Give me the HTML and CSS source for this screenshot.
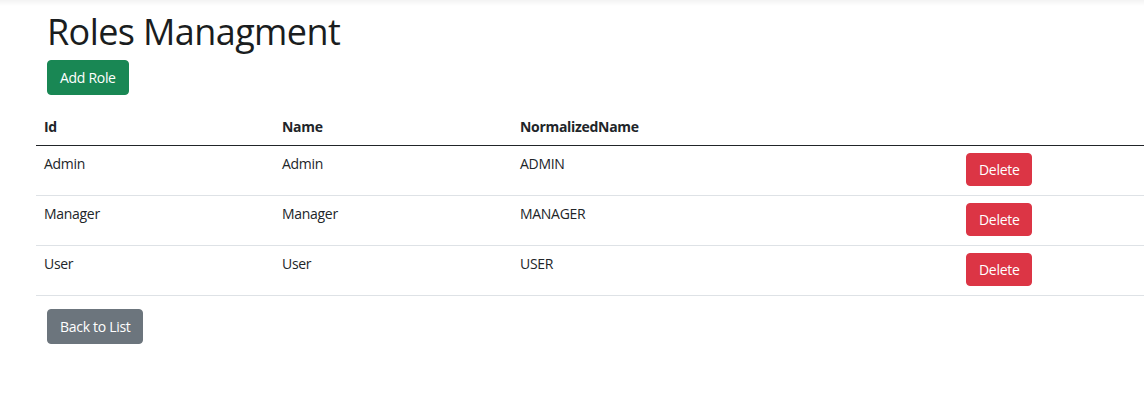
FILE: index.html
```html
<!DOCTYPE html>
<html lang="en">
<head>
<meta charset="utf-8">
<title>Roles Managment</title>
<link rel="stylesheet" href="styles.css">
</head>
<body>
<div class="topshade"></div>
<main class="page">
  <h1 class="title">Roles Managment</h1>
  <a class="btn btn-success" href="#">Add Role</a>
  <div class="table">
    <div class="row head">
      <div class="cell">Id</div>
      <div class="cell">Name</div>
      <div class="cell">NormalizedName</div>
      <div class="cell"></div>
      <div class="cell"></div>
    </div>
    <div class="row">
      <div class="cell">Admin</div>
      <div class="cell">Admin</div>
      <div class="cell">ADMIN</div>
      <div class="cell"></div>
      <div class="cell"><button class="btn btn-danger">Delete</button></div>
    </div>
    <div class="row">
      <div class="cell">Manager</div>
      <div class="cell">Manager</div>
      <div class="cell">MANAGER</div>
      <div class="cell"></div>
      <div class="cell"><button class="btn btn-danger">Delete</button></div>
    </div>
    <div class="row">
      <div class="cell">User</div>
      <div class="cell">User</div>
      <div class="cell">USER</div>
      <div class="cell"></div>
      <div class="cell"><button class="btn btn-danger">Delete</button></div>
    </div>
  </div>
  <a class="btn btn-secondary back" href="#">Back to List</a>
</main>
</body>
</html>
```
FILE: styles.css
```css
html, body {
  margin: 0;
  padding: 0;
  background: #fff;
  overflow: hidden;
}
body {
  font-family: "Open Sans", "Noto Sans", sans-serif;
  font-size: 14px;
  line-height: 1.5;
  color: #212529;
}
.topshade {
  height: 6px;
  background: linear-gradient(to bottom, #f3f3f3, #ffffff);
}
.page {
  padding-left: 36px;
  display: flex;
  flex-direction: column;
  align-items: flex-start;
}
.title {
  margin: 4px 0 6px 11px;
  font-size: 36px;
  font-weight: 500;
  line-height: 1.23;
  letter-spacing: -0.6px;
  color: #1a1d20;
}
.btn {
  display: inline-block;
  box-sizing: border-box;
  font-family: inherit;
  font-size: 14px;
  line-height: 21px;
  padding: 6px 12px;
  border: 1px solid transparent;
  border-radius: 4px;
  color: #fff;
  text-decoration: none;
  cursor: pointer;
  letter-spacing: -0.3px;
}
.btn-success {
  background: #198754;
  border-color: #198754;
  margin-left: 11px;
}
.btn-danger {
  background: #dc3545;
  border-color: #dc3545;
  padding: 5px 12px;
}
.btn-secondary {
  background: #6c757d;
  border-color: #6c757d;
}
.table {
  align-self: stretch;
  margin-top: 13px;
  display: flex;
  flex-direction: column;
}
.row {
  display: grid;
  grid-template-columns: 238px 238px 238px 208px 1fr;
  border-bottom: 1px solid #dee2e6;
}
.row.head {
  font-weight: 700;
  border-bottom: 1px solid #212529;
}
.cell {
  padding: 8px;
  letter-spacing: -0.3px;
}
.row:not(.head) .cell {
  padding: 7px 8px 9px;
}
.back {
  margin: 13px 0 0 11px;
}
```
